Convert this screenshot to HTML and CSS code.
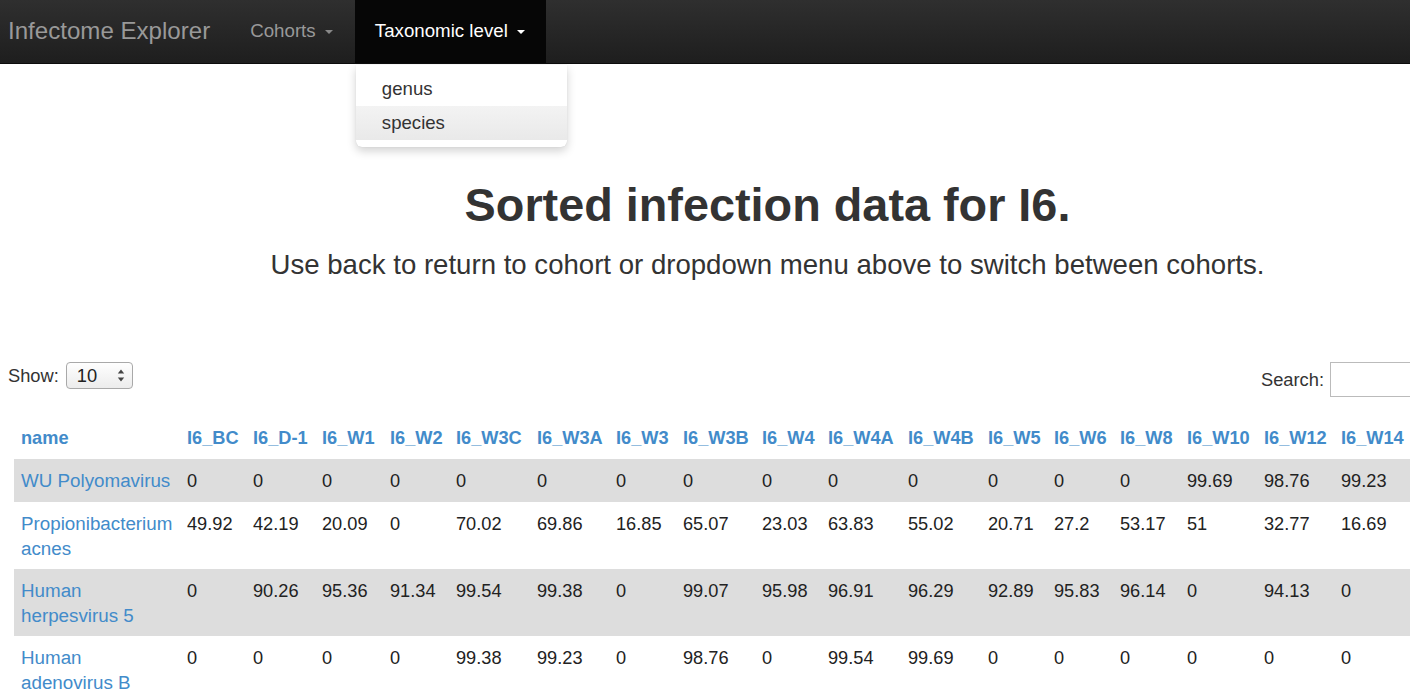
FILE: index.html
```html
<!DOCTYPE html>
<html>
<head>
<meta charset="utf-8">
<title>Infectome Explorer</title>
<link rel="stylesheet" href="styles.css">
</head>
<body>
<header class="navbar">
  <a class="brand">Infectome Explorer</a>
  <ul class="nav">
    <li class="nav-item"><a class="nav-link">Cohorts <span class="caret"></span></a></li>
    <li class="nav-item open">
      <a class="nav-link active">Taxonomic level <span class="caret light"></span></a>
      <ul class="dropdown">
        <li><a class="dd-item">genus</a></li>
        <li><a class="dd-item hover">species</a></li>
      </ul>
    </li>
  </ul>
</header>

<section class="hero">
  <h1 class="title">Sorted infection data for I6.</h1>
  <p class="lead">Use back to return to cohort or dropdown menu above to switch between cohorts.</p>
</section>

<section class="content">
  <div class="controls">
    <label class="length">Show:
      <span class="select">10
        <svg class="arrows" width="8" height="13" viewBox="0 0 8 13"><path d="M4 0.5 L7.2 4.5 L0.8 4.5 Z M4 12.5 L7.2 8.5 L0.8 8.5 Z" fill="#444"/></svg>
      </span>
    </label>
    <label class="filter">Search: <span class="input"></span></label>
  </div>

  <table class="data">
    <colgroup>
      <col class="w166"><col class="w66"><col class="w69"><col class="w68"><col class="w66"><col class="w81"><col class="w79"><col class="w67"><col class="w79"><col class="w66"><col class="w80"><col class="w80"><col class="w66"><col class="w66"><col class="w67"><col class="w77"><col class="w77"><col class="w77">
    </colgroup>
    <thead>
      <tr><th>name</th><th>I6_BC</th><th>I6_D-1</th><th>I6_W1</th><th>I6_W2</th><th>I6_W3C</th><th>I6_W3A</th><th>I6_W3</th><th>I6_W3B</th><th>I6_W4</th><th>I6_W4A</th><th>I6_W4B</th><th>I6_W5</th><th>I6_W6</th><th>I6_W8</th><th>I6_W10</th><th>I6_W12</th><th>I6_W14</th></tr>
    </thead>
    <tbody>
      <tr class="odd"><td class="name"><a>WU Polyomavirus</a></td><td>0</td><td>0</td><td>0</td><td>0</td><td>0</td><td>0</td><td>0</td><td>0</td><td>0</td><td>0</td><td>0</td><td>0</td><td>0</td><td>0</td><td>99.69</td><td>98.76</td><td>99.23</td></tr>
      <tr><td class="name"><a>Propionibacterium acnes</a></td><td>49.92</td><td>42.19</td><td>20.09</td><td>0</td><td>70.02</td><td>69.86</td><td>16.85</td><td>65.07</td><td>23.03</td><td>63.83</td><td>55.02</td><td>20.71</td><td>27.2</td><td>53.17</td><td>51</td><td>32.77</td><td>16.69</td></tr>
      <tr class="odd"><td class="name"><a>Human herpesvirus 5</a></td><td>0</td><td>90.26</td><td>95.36</td><td>91.34</td><td>99.54</td><td>99.38</td><td>0</td><td>99.07</td><td>95.98</td><td>96.91</td><td>96.29</td><td>92.89</td><td>95.83</td><td>96.14</td><td>0</td><td>94.13</td><td>0</td></tr>
      <tr><td class="name"><a>Human adenovirus B</a></td><td>0</td><td>0</td><td>0</td><td>0</td><td>99.38</td><td>99.23</td><td>0</td><td>98.76</td><td>0</td><td>99.54</td><td>99.69</td><td>0</td><td>0</td><td>0</td><td>0</td><td>0</td><td>0</td></tr>
    </tbody>
  </table>
</section>
</body>
</html>
```

FILE: styles.css
```css
html {
  overflow: hidden;
}
body {
  margin: 0;
  font-family: "Liberation Sans", Arial, sans-serif;
  color: #333;
  background: #fff;
}
a { text-decoration: none; }
ul { list-style: none; margin: 0; padding: 0; }

.navbar {
  display: flex;
  align-items: stretch;
  height: 64px;
  width: 1535px;
  box-sizing: border-box;
  background: linear-gradient(#2f2f2f, #1e1e1e);
  border-bottom: 1px solid #0c0c0c;
  position: relative;
}
.brand {
  display: flex;
  align-items: center;
  padding: 0 20px 2px 8px;
  font-size: 24.1px;
  color: #999;
}
.nav {
  display: flex;
  gap: 1px;
}
.nav-item {
  position: relative;
  display: flex;
}
.nav-link {
  display: flex;
  align-items: center;
  padding: 0 21px 2px 20px;
  font-size: 18.7px;
  color: #999;
  white-space: pre;
}
.nav-link.active {
  background: #060606;
  color: #fff;
}
.caret {
  display: inline-block;
  width: 0;
  height: 0;
  margin-left: 4px;
  margin-top: 2px;
  border-top: 4px solid #888;
  border-left: 4px solid transparent;
  border-right: 4px solid transparent;
}
.caret.light {
  border-top-color: #fff;
}
.dropdown {
  position: absolute;
  top: 65px;
  left: 1px;
  width: 211px;
  padding: 7px 0;
  background: #fff;
  border-radius: 0 0 6px 6px;
  box-shadow: 0 4px 10px rgba(0, 0, 0, 0.18), 0 0 1px rgba(0, 0, 0, 0.15);
  z-index: 10;
}
.dd-item {
  display: block;
  height: 34px;
  line-height: 34px;
  padding-left: 26px;
  font-size: 18.6px;
  color: #333;
}
.dd-item.hover {
  background: linear-gradient(#f3f3f3, #e9e9e9);
}

.hero {
  width: 1535px;
  text-align: center;
  padding-top: 113px;
}
.title {
  margin: 0;
  font-size: 46.8px;
  line-height: 56px;
  font-weight: bold;
  color: #333;
}
.lead {
  margin: 15px 0 0;
  font-size: 27.6px;
  line-height: 34px;
  color: #333;
}

.content {
  width: 1519px;
  padding: 0 8px;
  margin-top: 80px;
}
.controls {
  display: flex;
  justify-content: space-between;
  align-items: flex-start;
  font-size: 18.3px;
}
.length {
  display: flex;
  align-items: center;
  gap: 7px;
  margin-top: 0;
}
.select {
  display: inline-flex;
  align-items: center;
  justify-content: space-between;
  box-sizing: border-box;
  width: 67px;
  height: 27px;
  padding: 0 7px 0 10px;
  border: 1px solid #a9a9a9;
  border-radius: 4px;
  background: linear-gradient(#fefefe, #ececec);
  font-size: 18.3px;
  color: #222;
}
.arrows { display: block; }
.filter {
  display: flex;
  align-items: center;
  gap: 6px;
  padding-top: 0;
}
.input {
  display: block;
  box-sizing: border-box;
  width: 197px;
  height: 35px;
  border: 1px solid #bbb;
  background: #fff;
}

.data {
  table-layout: fixed;
  width: 1397px;
  border-collapse: collapse;
  margin: 19px 0 0 6px;
  font-size: 18.2px;
}
.data th,
.data td {
  padding: 9px 7px 8px;
  line-height: 26px;
  text-align: left;
  vertical-align: top;
}
.data th {
  font-weight: bold;
  color: #428bca;
  white-space: nowrap;
}
.data td {
  color: #222;
  white-space: nowrap;
}
.data td.name {
  white-space: normal;
  font-size: 18.8px;
  line-height: 25px;
}
.data td.name a {
  color: #428bca;
}
.data tr.odd td {
  background: #dddddd;
}

.w166 { width: 166px; }
.w66 { width: 66px; }
.w67 { width: 67px; }
.w68 { width: 68px; }
.w69 { width: 69px; }
.w77 { width: 77px; }
.w79 { width: 79px; }
.w80 { width: 80px; }
.w81 { width: 81px; }
```
